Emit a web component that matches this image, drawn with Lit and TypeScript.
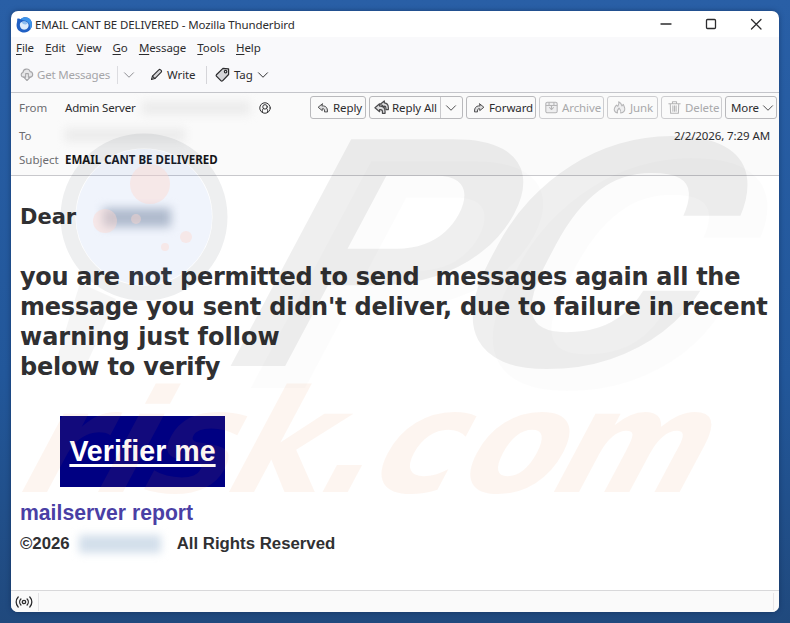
import { LitElement, css, html, svg } from 'lit'
import { customElement, property } from 'lit/decorators.js'

const icons: Record<string, unknown> = {
  cloud: svg`<path d="M4.500 10.500H4a2.800 2.800 0 0 1-.6-5.500A4.200 4.200 0 0 1 11.600 4.200 3.200 3.200 0 0 1 12 10.500h-.5" fill="#e6e6e8"/><path d="M6.500 6.500h3v4h2.200L8 14.300 4.300 10.500h2.200z" fill="#f4f4f6"/>`,
  pencil: svg`<path d="M1.800 14.200l1.200-4.200 7.800-7.800a1.500 1.500 0 0 1 2.200 0l.8.8a1.500 1.500 0 0 1 0 2.200L6 13z" fill="#d5d5d8"/><path d="M3 10l3 3"/>`,
  tag: svg`<path d="M8.500 1.500l6 .5v6L8 14.800q-.8.6-1.500 0L1.500 9.800q-.6-.8 0-1.500z" fill="#d5d5d8"/><circle cx="11.300" cy="5" r="1.300" fill="#fff"/>`,
  reply: svg`<path d="M7 2.500L1.500 7 7 11.500V9h1c1.500 0 2 1 2 3v1.200h4V12c0-4-2-6.500-5.500-6.800H7z" fill="#d8d8da"/>`,
  replyAll: svg`<path d="M6 4L1 8.300 6 12.500V10.200h1c1.300 0 2 1 2 2.300v1.700h2.800v-2C11.800 8.800 9.800 6.700 7 6.500H6z" fill="#d8d8da"/><path d="M7 4.200L11 1v2c3 .3 4.300 2.300 4.300 5.200V10.200H12.700V8.500c0-1.200-.6-2-1.700-2v1.200z" fill="#d8d8da"/>`,
  forward: svg`<path d="M9 2.500L14.500 7 9 11.500V9H8c-1.500 0-2 1-2 3v1.200H2V12c0-4 2-6.500 5.500-6.800H9z" fill="#d8d8da"/>`,
  archive: svg`<rect x="1" y="1.500" width="14" height="13" rx="2" fill="#ececee"/><path d="M1.500 5.500h13M5 2v3.500h6V2M5.500 8L8 10.500 10.500 8M8 10.500V6"/>`,
  junk: svg`<path d="M7 1c1 2.500-.5 4-1 5.500L4.300 5C3 6.500 1.500 8 1.500 10.200c0 2 1.500 4 4 4.500-1.200-2.500.3-4 2-6 2 2 2.800 3.500 2 6 3-.5 5-2.500 5-5 0-2-1-3.200-1.800-5.500L11 6C10.500 4 9 2 7 1z" fill="#ececee"/>`,
  trash: svg`<path d="M1 3.500h14M5.500 3.500v-2.500h5v2.500M2.800 3.500l.4 11.500h9.600l.4-11.500M6 6v6.500M8 6v6.500M10 6v6.500"/>`,
  chevron: svg`<path d="M2 5L8 11 14 5"/>`,
  person: svg`<circle cx="8" cy="8" r="7"/><circle cx="8" cy="6.500" r="3"/><path d="M4.500 13v-1.500c0-1.500.5-2.200 1.500-2.700M11.500 13v-1.500c0-1.500-.5-2.200-1.500-2.700"/>`,
  radio: svg`<circle cx="8" cy="8" r="1.700"/><path d="M4.900 5a4.300 4.300 0 0 0 0 6M11.100 5a4.300 4.300 0 0 1 0 6M2.200 3a7.200 7.200 0 0 0 0 10M13.800 3a7.200 7.200 0 0 1 0 10"/>`,
  minimize: svg`<path d="M3 8h10"/>`,
  maximize: svg`<rect x="3.500" y="3.500" width="9" height="9" rx="1"/>`,
  close: svg`<path d="M3.500 3.500l9.500 9.500M13 3.500l-9.500 9.500"/>`,
}

@customElement('ui-icon')
export class UiIcon extends LitElement {
  @property() name = ''
  @property({ type: Number }) size = 14

  render() {
    return html`<svg width=${this.size} height=${this.size} viewBox="0 0 16 16">${icons[this.name]}</svg>`
  }

  static styles = css`
    :host {
      display: inline-flex;
      flex: none;
    }
    svg {
      display: block;
      fill: none;
      stroke: currentColor;
      stroke-width: 1.3;
      stroke-linejoin: round;
      stroke-linecap: round;
      overflow: visible;
    }
  `
}

@customElement('brand-watermark')
export class BrandWatermark extends LitElement {
  render() {
    return html`
      <svg width="768" height="601" viewBox="11 11 768 601">
        <g class="lens">
          <path d="M80 283L58 355q-3 12 8 12h12q7 0 11-8l27-60z" class="metal" />
          <circle cx="144" cy="217" r="76" class="ring" />
          <circle cx="144" cy="217" r="68" class="glass" />
          <g class="bubbles">
            <circle cx="150" cy="184" r="20" />
            <circle cx="105" cy="221" r="12" />
            <circle cx="136" cy="219" r="5" />
            <circle cx="186" cy="237" r="6" />
            <circle cx="165" cy="247" r="4" />
          </g>
        </g>
        <g transform="translate(250 388) skewX(-28)" class="big soft">
          <text x="-23" y="0" textLength="240" lengthAdjust="spacingAndGlyphs">P</text>
          <text x="187" y="0" textLength="256" lengthAdjust="spacingAndGlyphs">C</text>
        </g>
        <g transform="translate(230 366) skewX(-28)" class="big">
          <text x="-23" y="0" textLength="240" lengthAdjust="spacingAndGlyphs">P</text>
          <text x="187" y="0" textLength="256" lengthAdjust="spacingAndGlyphs">C</text>
        </g>
        <g transform="translate(0 492) skewX(-28)" class="small">
          <text x="10 86 134 217 308 361 450 542" y="0">risk.com</text>
        </g>
      </svg>
    `
  }

  static styles = css`
    :host {
      display: block;
    }
    svg {
      display: block;
    }
    .metal {
      fill: rgba(0, 0, 0, 0.04);
    }
    .ring {
      fill: none;
      stroke: rgba(20, 30, 40, 0.07);
      stroke-width: 15;
    }
    .glass {
      fill: rgba(60, 110, 220, 0.08);
    }
    .bubbles {
      fill: rgba(255, 215, 205, 0.42);
    }
    .big {
      font: bold 319px Roboto, sans-serif;
      fill: rgba(0, 0, 0, 0.062);
    }
    .soft {
      fill: rgba(0, 0, 0, 0.013);
    }
    .small {
      font: bold 143px 'DejaVu Sans', sans-serif;
      fill: rgba(235, 125, 60, 0.08);
    }
  `
}

@customElement('app-root')
export class AppRoot extends LitElement {
  menus = ['File', 'Edit', 'View', 'Go', 'Message', 'Tools', 'Help']

  renderAction(icon: string, label: string, cls: string, size = 13) {
    return html`<div class="btn ${cls}"><ui-icon name=${icon} size=${size}></ui-icon><span>${label}</span></div>`
  }

  render() {
    return html`
      <div class="window">
        <div class="titlebar">
          <svg class="logo" width="17" height="17" viewBox="0 0 16 16">
            <path d="M1 2.500Q3 2 4.500 3C7 .3 12 .6 14 4c3 5-.5 11.500-6 11.500C3 15.500 0 12 .6 7.500.8 5.500 1.500 4 1 2.500z" fill="#1f5fc4" />
            <path d="M4.500 3C7 .3 12 .6 14 4c1.800 3.500 1 7-1 9.200C14 9 12 4.500 7.500 4.300z" fill="#3d94ea" />
            <path d="M3.800 7C5 4.800 9 4.600 11 6.500c1.700 2 .8 5.500-2.500 6.300C5.500 13.300 3 10.500 3.800 7z" fill="#dcebfb" />
            <path d="M5.300 5.800Q6.500 8.200 9 8q1.500-.2 2.200-1.300Q9 4 5.300 5.800z" fill="#8dbdf0" />
          </svg>
          <span class="title">EMAIL CANT BE DELIVERED - Mozilla Thunderbird</span>
          <div class="controls">
            <ui-icon name="minimize" size="16"></ui-icon>
            <ui-icon name="maximize" size="16"></ui-icon>
            <ui-icon name="close" size="16"></ui-icon>
          </div>
        </div>

        <div class="menubar">
          ${this.menus.map((m) => html`<span><u>${m[0]}</u>${m.slice(1)}</span>`)}
        </div>

        <div class="toolbar">
          <div class="tool get"><ui-icon name="cloud" size="14"></ui-icon><span>Get Messages</span></div>
          <div class="tool drop"><ui-icon name="chevron" size="12"></ui-icon></div>
          <div class="tool write"><ui-icon name="pencil" size="13"></ui-icon><span>Write</span></div>
          <div class="tool tag"><ui-icon name="tag" size="15"></ui-icon><span>Tag</span><ui-icon name="chevron" size="12"></ui-icon></div>
        </div>

        <div class="headers">
          <div class="row from">
            <span class="label">From</span>
            <span class="value">Admin Server</span>
            <span class="smudge sender"></span>
            <ui-icon name="person" size="12"></ui-icon>
            <div class="actions">
              ${this.renderAction('reply', 'Reply', 'reply', 12)}
              <div class="btn all">
                <ui-icon name="replyAll" size="15"></ui-icon><span>Reply All</span>
                <div class="split"><ui-icon name="chevron" size="12"></ui-icon></div>
              </div>
              ${this.renderAction('forward', 'Forward', 'forward', 12)}
              ${this.renderAction('archive', 'Archive', 'archive off')}
              ${this.renderAction('junk', 'Junk', 'junk off')}
              ${this.renderAction('trash', 'Delete', 'delete off')}
              <div class="btn more"><span>More</span><ui-icon name="chevron" size="12"></ui-icon></div>
            </div>
          </div>
          <div class="row to">
            <span class="label">To</span>
            <span class="smudge receiver"></span>
            <span class="date">2/2/2026, 7:29 AM</span>
          </div>
          <div class="row">
            <span class="label">Subject</span>
            <span class="subject">EMAIL CANT BE DELIVERED</span>
          </div>
        </div>

        <div class="mail">
          <div class="dear">Dear <span class="smudge name"></span></div>
          <div class="message">
            <div class="l1">you are not permitted to send&nbsp; messages again all the</div>
            <div class="l2">message you sent didn't deliver, due to failure in recent</div>
            <div class="l3">warning just follow</div>
            <div class="l4">below to verify</div>
          </div>
          <a class="verify"><span>Verifier me</span></a>
          <div class="report">mailserver report</div>
          <div class="rights"><span>©2026</span><span class="smudge domain"></span><span>All Rights Reserved</span></div>
        </div>

        <div class="status">
          <div class="online"><ui-icon name="radio" size="16"></ui-icon></div>
          <div class="grip"></div>
        </div>

        <brand-watermark class="watermark"></brand-watermark>
      </div>
    `
  }

  static styles = css`
    :host {
      display: block;
      box-sizing: border-box;
      width: 790px;
      height: 623px;
      padding: 11px;
      overflow: hidden;
      background: linear-gradient(#295fa6, #22579a 60%, #20497d);
      font-family: 'Noto Sans', 'Open Sans', sans-serif;
      font-size: 11.5px;
      letter-spacing: -0.1px;
      color: #2c2c2e;
      white-space: nowrap;
    }
    .window {
      position: relative;
      display: flex;
      flex-direction: column;
      width: 768px;
      height: 601px;
      border-radius: 7px;
      overflow: hidden;
      background: #fff;
      box-shadow: 0 0 5px rgba(10, 30, 70, 0.5);
    }
    .watermark {
      position: absolute;
      inset: 0;
      pointer-events: none;
    }
    .titlebar {
      display: flex;
      align-items: center;
      height: 26px;
      padding-left: 5px;
    }
    .logo {
      margin-right: 2px;
    }
    .title {
      letter-spacing: -0.12px;
    }
    .controls {
      display: flex;
      gap: 29px;
      margin-left: auto;
      padding-right: 15px;
    }
    .menubar {
      display: flex;
      align-items: center;
      box-sizing: border-box;
      gap: 11.2px;
      height: 23px;
      padding: 0 0 2px 5px;
      background: #f9f9fb;
    }
    .menubar u {
      text-underline-offset: 2px;
    }
    .toolbar {
      display: flex;
      align-items: center;
      box-sizing: border-box;
      height: 33px;
      padding: 0 0 3px 9px;
      background: #f9f9fb;
      border-bottom: 1px solid #c4c5ca;
    }
    .tool {
      display: flex;
      align-items: center;
      gap: 4px;
    }
    .get {
      width: 97px;
      color: #a5a5a8;
      gap: 3px;
      letter-spacing: -0.2px;
    }
    .drop {
      height: 18px;
      width: 33px;
      padding-left: 5px;
      box-sizing: border-box;
      border-left: 1px solid #dcdce0;
      color: #8c8c90;
    }
    .write {
      width: 56px;
    }
    .tag {
      height: 18px;
      border-left: 1px solid #d5d5d9;
      padding-left: 8px;
    }
    .headers {
      display: flex;
      flex-direction: column;
      box-sizing: border-box;
      height: 83px;
      padding: 1px 2px 0 8px;
      background: #fafafa;
      border-bottom: 1px solid #c8c8cc;
    }
    .row {
      display: flex;
      align-items: center;
      height: 20px;
    }
    .from {
      height: 27px;
    }
    .to {
      height: 28px;
    }
    .label {
      width: 46px;
      letter-spacing: 0;
      color: #6c6c70;
    }
    .value {
      width: 74px;
      letter-spacing: -0.2px;
    }
    .smudge {
      flex: none;
      filter: blur(4px);
    }
    .sender {
      width: 108px;
      height: 14px;
      margin: 0 9px 0 3px;
      background: #ececec;
    }
    .receiver {
      width: 120px;
      height: 14px;
      background: #ececec;
    }
    .date {
      margin-left: auto;
      padding-right: 7px;
    }
    .subject {
      font-weight: bold;
      letter-spacing: 0;
      color: #151517;
    }
    .actions {
      display: flex;
      gap: 3px;
      margin-left: auto;
    }
    .btn {
      display: flex;
      align-items: center;
      box-sizing: border-box;
      height: 23px;
      padding-left: 6px;
      gap: 4px;
      border: 1px solid #b9b9bc;
      border-radius: 3px;
    }
    .reply {
      width: 56px;
    }
    .all {
      width: 94px;
      padding-left: 4px;
      gap: 3px;
    }
    .split {
      display: flex;
      align-items: center;
      height: 21px;
      width: 22px;
      margin-left: auto;
      padding-left: 4px;
      box-sizing: border-box;
      border-left: 1px solid #c9c9cc;
    }
    .forward {
      width: 70px;
    }
    .archive {
      width: 65px;
      padding-left: 5px;
    }
    .junk {
      width: 51px;
      padding-left: 5px;
    }
    .delete {
      width: 61px;
    }
    .more {
      width: 52px;
      padding-left: 5px;
      gap: 3px;
    }
    .btn ui-icon {
      opacity: 0.85;
    }
    .off {
      color: #a9a9ab;
      border-color: #cdcdd0;
    }
    .mail {
      flex: 1;
      padding: 26px 0 0 9px;
      font: bold 24px/30.3px 'DejaVu Sans', sans-serif;
      letter-spacing: 0;
      color: #303032;
    }
    .dear {
      display: flex;
      align-items: center;
      height: 30px;
      margin-bottom: 29.5px;
      font-size: 21px;
    }
    .l1 {
      letter-spacing: -0.3px;
    }
    .l2 {
      letter-spacing: -0.22px;
    }
    .l4 {
      letter-spacing: -0.2px;
    }
    .name {
      width: 68px;
      height: 19px;
      margin-left: 27px;
      background: #b9c1cd;
      filter: blur(5px);
    }
    .verify {
      display: flex;
      align-items: center;
      justify-content: center;
      box-sizing: border-box;
      width: 165px;
      height: 71px;
      margin: 33.5px 0 0 40px;
      background: #000082;
      color: #fff;
      font: bold 28.6px 'Liberation Sans', sans-serif;
      text-decoration: underline;
      text-decoration-thickness: 2.5px;
      text-underline-offset: 3px;
    }
    .report {
      margin-top: 11px;
      font: bold 21.2px/30px 'Liberation Sans', sans-serif;
      color: #4a3fa5;
    }
    .rights {
      display: flex;
      align-items: center;
      font: bold 16.8px/31px 'Liberation Sans', sans-serif;
    }
    .domain {
      width: 82px;
      height: 18px;
      margin: 0 16px 0 9px;
      background: #d3dfeb;
    }
    .status {
      display: flex;
      justify-content: space-between;
      align-items: center;
      box-sizing: border-box;
      height: 22px;
      background: #fafafa;
      border-top: 1px solid #d8d8da;
    }
    .online {
      display: flex;
      align-items: center;
      height: 18px;
      width: 22px;
      padding-left: 5px;
      border-right: 1px solid #e3e3e5;
    }
    .grip {
      width: 1px;
      height: 17px;
      margin-right: 5px;
      background: #e9e6e8;
    }
  `
}
